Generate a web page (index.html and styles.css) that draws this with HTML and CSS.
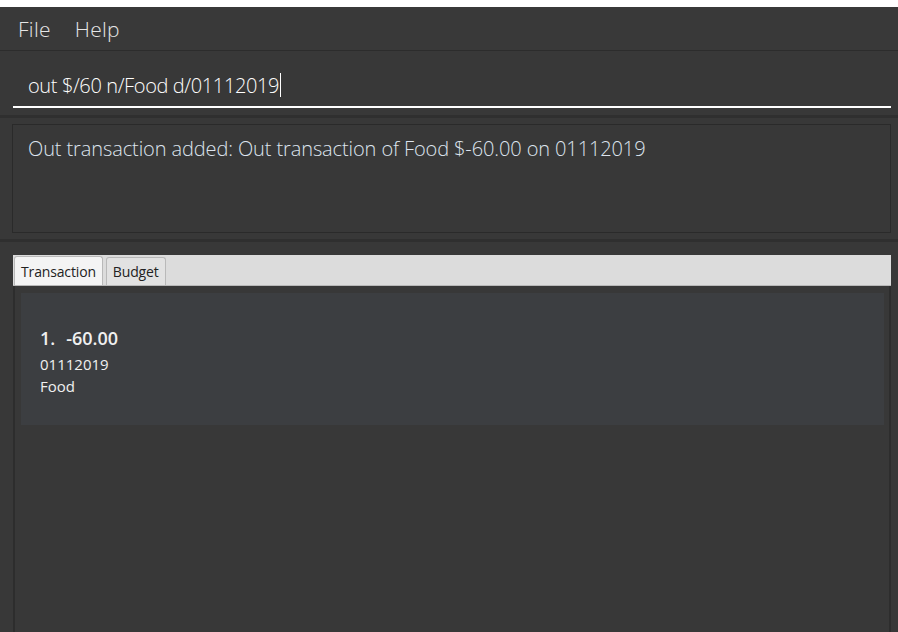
FILE: index.html
```html
<!DOCTYPE html>
<html>
<head>
<meta charset="utf-8">
<link rel="stylesheet" href="styles.css">
</head>
<body>
<div class="topstrip"></div>
<div class="app">
  <div class="menubar">
    <span class="menu">File</span>
    <span class="menu">Help</span>
  </div>
  <div class="command">
    <div class="input"><span class="typed">out $/60 n/Food d/01112019</span><span class="caret"></span></div>
  </div>
  <div class="result-wrap">
    <div class="result">Out transaction added: Out transaction of Food $-60.00 on 01112019</div>
  </div>
  <div class="tabs-wrap">
    <div class="tabpane">
      <div class="tabheader">
        <div class="tab active">Transaction</div>
        <div class="tab">Budget</div>
      </div>
      <div class="tabcontent">
        <div class="card">
          <div class="card-title"><span class="idx">1.</span><span>-60.00</span></div>
          <div class="card-line">01112019</div>
          <div class="card-line">Food</div>
        </div>
      </div>
    </div>
  </div>
</div>
</body>
</html>
```

FILE: styles.css
```css
html, body {
  margin: 0;
  padding: 0;
  background: #383838;
  overflow: hidden;
}
body {
  width: 898px;
  height: 632px;
  font-family: "Open Sans", "Noto Sans", sans-serif;
}
.topstrip {
  height: 7px;
  background: #ffffff;
}
.app {
  display: flex;
  flex-direction: column;
  height: 625px;
  background: #383838;
}
.menubar {
  height: 44px;
  display: flex;
  align-items: center;
  gap: 24px;
  padding-left: 18px;
  background: #393939;
  border-bottom: 1px solid #2c2c2c;
  box-sizing: border-box;
}
.menu {
  color: #e6e6e6;
  font-size: 21px;
  font-weight: 300;
  letter-spacing: 0.3px;
}
.command {
  padding: 0 7px 7px 13px;
  box-sizing: border-box;
  display: flex;
  align-items: flex-end;
  border-bottom: 3px solid #2f2f2f;
  height: 67px;
}
.input {
  flex: 1;
  height: 40px;
  border-bottom: 2px solid #ffffff;
  display: flex;
  align-items: center;
  padding-left: 15px;
  padding-bottom: 4px;
  box-sizing: border-box;
}
.typed {
  color: #ffffff;
  font-size: 20px;
  font-weight: 300;
  letter-spacing: -0.38px;
}
.caret {
  display: inline-block;
  width: 1px;
  height: 24px;
  background: #ffffff;
  margin-left: 1px;
}
.result-wrap {
  padding: 6px 7px 6px 12px;
  border-bottom: 3px solid #2f2f2f;
}
.result {
  height: 109px;
  box-sizing: border-box;
  border: 1px solid #2a2a2a;
  padding: 10px 15px;
  color: #dde4ee;
  font-size: 20px;
  font-weight: 300;
  letter-spacing: -0.11px;
  line-height: 28px;
}
.tabs-wrap {
  flex: 1;
  padding: 13px 7px 0 13px;
  display: flex;
}
.tabpane {
  flex: 1;
  display: flex;
  flex-direction: column;
}
.tabheader {
  height: 31px;
  background: #dcdcdc;
  display: flex;
  align-items: flex-end;
  gap: 3px;
  padding-left: 1px;
  border-bottom: 1px solid #b8b8b8;
  box-sizing: border-box;
}
.tab {
  height: 28px;
  box-sizing: border-box;
  padding: 0 6px;
  display: flex;
  align-items: center;
  font-size: 14px;
  letter-spacing: -0.15px;
  color: #222;
  background: #e2e2e2;
  border: 1px solid #b9b9b9;
  border-bottom: none;
  border-radius: 3px 3px 0 0;
}
.tab.active {
  background: #f4f4f4;
  height: 29px;
}
.tabcontent {
  flex: 1;
  background: #383838;
  border-left: 2px solid #2d2d2d;
  border-right: 2px solid #2d2d2d;
  padding: 7px 5px 0 6px;
}
.card {
  height: 132px;
  background: #3c3e41;
  padding: 31px 19px 0;
  box-sizing: border-box;
  color: #f0f0f0;
}
.card-title {
  font-size: 18px;
  font-weight: 600;
  display: flex;
  gap: 11px;
  line-height: 28px;
  margin-bottom: 1px;
}
.card-line {
  font-size: 15px;
  line-height: 22px;
}
```
